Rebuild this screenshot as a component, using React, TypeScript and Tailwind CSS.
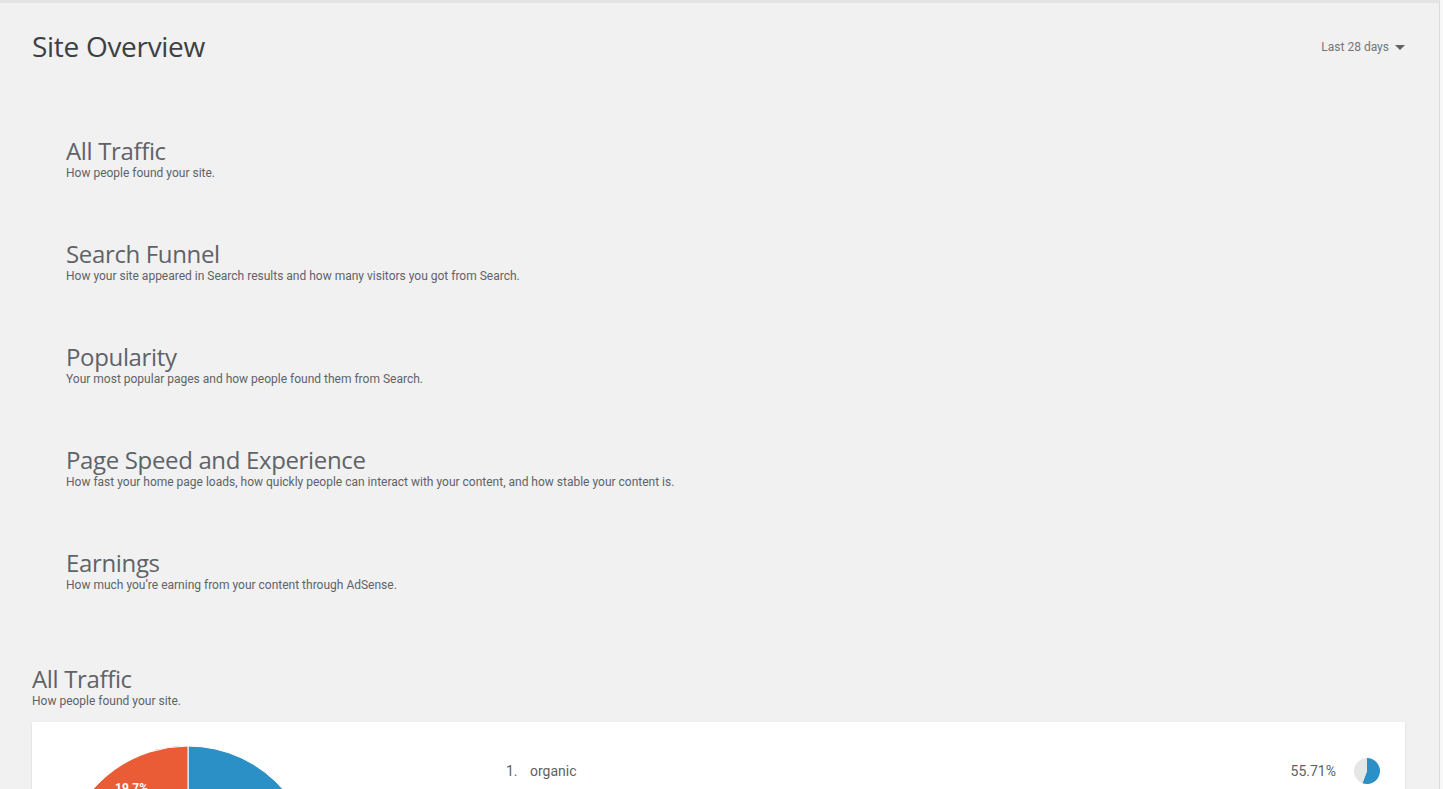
const sections = [
  { title: 'All Traffic', desc: 'How people found your site.' },
  { title: 'Search Funnel', desc: 'How your site appeared in Search results and how many visitors you got from Search.' },
  { title: 'Popularity', desc: 'Your most popular pages and how people found them from Search.' },
  {
    title: 'Page Speed and Experience',
    desc: 'How fast your home page loads, how quickly people can interact with your content, and how stable your content is.',
  },
  { title: 'Earnings', desc: 'How much you’re earning from your content through AdSense.' },
];

const slices = [
  { value: 55.71, color: '#2a90c6' },
  { value: 14.3, color: '#7cb342' },
  { value: 10.29, color: '#f6b400' },
  { value: 19.7, color: '#ea5c36' },
];

function point(cx: number, cy: number, r: number, frac: number) {
  const a = frac * Math.PI * 2 - Math.PI / 2;
  return [cx + r * Math.cos(a), cy + r * Math.sin(a)];
}

function Pie({ size, data, stroke }: { size: number; data: { value: number; color: string }[]; stroke?: string }) {
  const r = size / 2;
  const total = data.reduce((s, d) => s + d.value, 0);
  let acc = 0;
  return (
    <svg width={size} height={size} viewBox={`0 0 ${size} ${size}`}>
      {data.map((d, i) => {
        const start = acc / total;
        acc += d.value;
        const end = acc / total;
        const [x1, y1] = point(r, r, r, start);
        const [x2, y2] = point(r, r, r, end);
        const large = end - start > 0.5 ? 1 : 0;
        return (
          <path
            key={i}
            d={`M${r} ${r} L${x1} ${y1} A${r} ${r} 0 ${large} 1 ${x2} ${y2} Z`}
            fill={d.color}
            stroke={stroke}
            strokeWidth={stroke ? 1 : 0}
          />
        );
      })}
    </svg>
  );
}

const headingFont = { fontFamily: '"Open Sans", sans-serif' };

function SectionLink({ title, desc }: { title: string; desc: string }) {
  return (
    <div className="mb-[59px]">
      <h2 className="text-[24px] leading-[28px] text-[#5f6368] tracking-[-0.35px]" style={headingFont}>
        {title}
      </h2>
      <p className="text-[12px] leading-[16px] text-[#5f6368]">{desc}</p>
    </div>
  );
}

export default function App() {
  return (
    <div className="h-[789px] w-full overflow-hidden bg-[#f1f1f1] flex" style={{ fontFamily: 'Roboto, "Liberation Sans", sans-serif' }}>
      <main className="flex-1 border-t-[3px] border-[#e4e4e4] border-r border-r-[#dcdcdc] pl-8 pr-[34px]">
        <header className="flex items-start justify-between pt-[27px]">
          <h1 className="text-[28px] leading-[32px] text-[#3c4043] tracking-[-0.3px]" style={headingFont}>
            Site Overview
          </h1>
          <button className="flex items-center gap-[6px] mt-[8px] text-[12px] text-[#757575]">
            Last 28 days
            <svg width="10" height="5" viewBox="0 0 10 5">
              <path d="M0 0h10L5 5z" fill="#616161" />
            </svg>
          </button>
        </header>

        <nav className="pl-[34px] pt-[75px]">
          {sections.map((s) => (
            <SectionLink key={s.title} title={s.title} desc={s.desc} />
          ))}
        </nav>

        <section className="mt-[72px]">
          <h2 className="text-[24px] leading-[28px] text-[#5f6368] tracking-[-0.35px]" style={headingFont}>
            All Traffic
          </h2>
          <p className="text-[12px] leading-[16px] text-[#5f6368]">How people found your site.</p>

          <div className="mt-[13px] bg-white shadow-[0_1px_2px_rgba(0,0,0,0.12)] flex pt-[24px] pl-[30px] pr-[25px]">
            <div className="relative w-[252px] h-[252px] shrink-0">
              <Pie size={252} data={slices} stroke="#ffffff" />
              <span className="absolute left-[53px] top-[35px] text-[12px] leading-[14px] font-bold text-white">19.7%</span>
            </div>
            <ol className="flex-1 ml-[192px] pt-[15px]">
              <li className="flex items-center h-[20px] text-[14px] text-[#616161]">
                <span className="w-[24px]">1.</span>
                <span className="flex-1">organic</span>
                <span className="mr-[18px]">55.71%</span>
                <Pie size={26} data={[{ value: 55.71, color: '#2a90c6' }, { value: 44.29, color: '#e6e6e6' }]} />
              </li>
            </ol>
          </div>
        </section>
      </main>
      <div className="w-[3px] bg-[#f8f8f8]" />
    </div>
  );
}
